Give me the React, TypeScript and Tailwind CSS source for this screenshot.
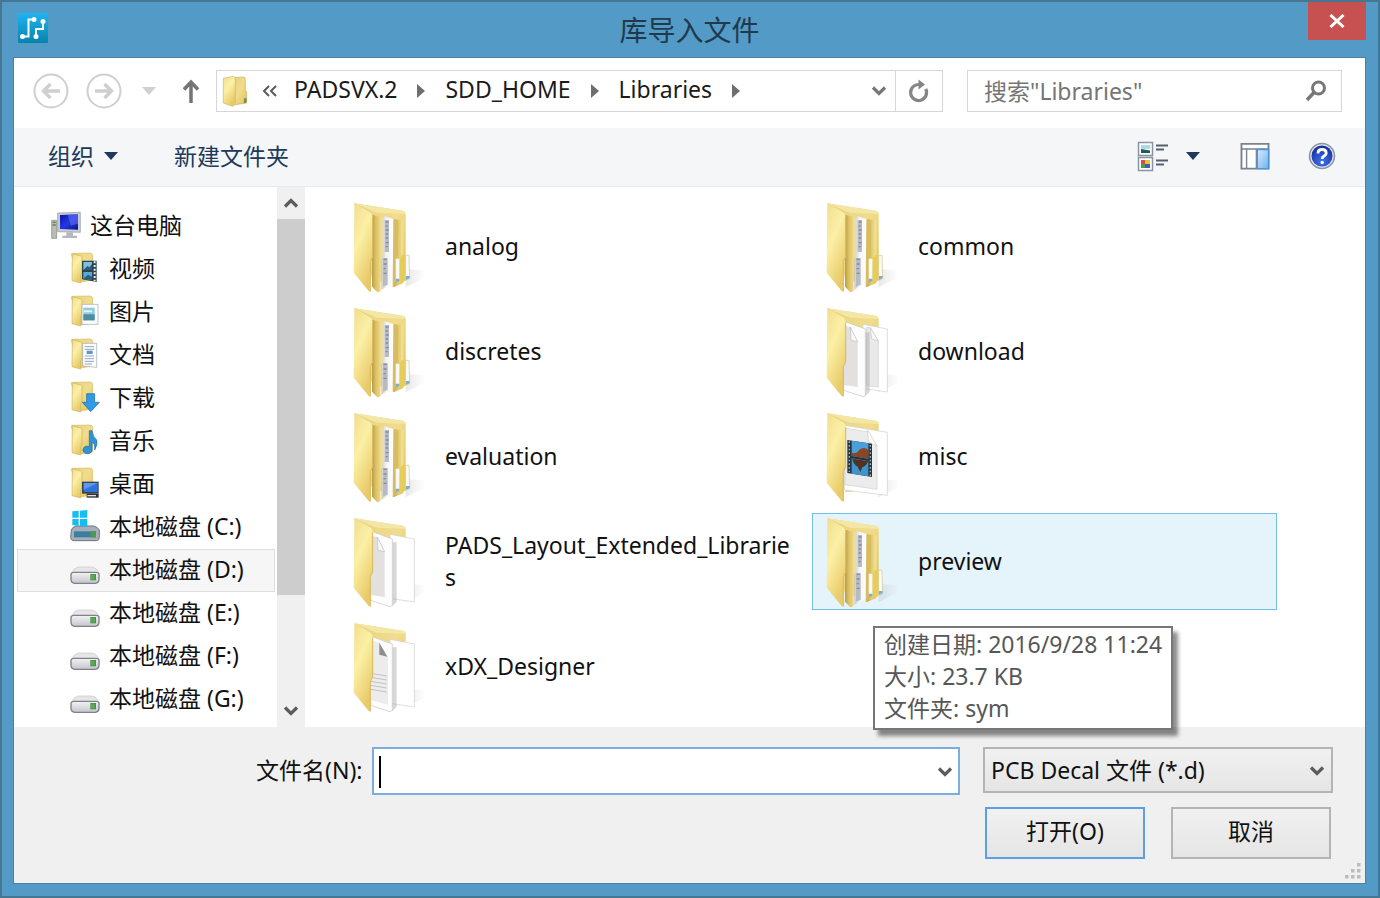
import type { ReactNode } from "react";
import clsx from "clsx";

type PlaceIcon = "video" | "picture" | "document" | "download" | "music" | "desktop" | "system" | "drive";
type FolderKind = "binders" | "papers" | "film" | "layout" | "text";

const places: { label: string; icon: PlaceIcon; selected?: boolean }[] = [
  { label: "视频", icon: "video" },
  { label: "图片", icon: "picture" },
  { label: "文档", icon: "document" },
  { label: "下载", icon: "download" },
  { label: "音乐", icon: "music" },
  { label: "桌面", icon: "desktop" },
  { label: "本地磁盘 (C:)", icon: "system" },
  { label: "本地磁盘 (D:)", icon: "drive", selected: true },
  { label: "本地磁盘 (E:)", icon: "drive" },
  { label: "本地磁盘 (F:)", icon: "drive" },
  { label: "本地磁盘 (G:)", icon: "drive" },
];

const folders: { name: string; kind: FolderKind; tip?: string[] }[] = [
  { name: "analog", kind: "binders" },
  { name: "common", kind: "binders" },
  { name: "discretes", kind: "binders" },
  { name: "download", kind: "papers" },
  { name: "evaluation", kind: "binders" },
  { name: "misc", kind: "film" },
  { name: "PADS_Layout_Extended_Libraries", kind: "layout" },
  {
    name: "preview",
    kind: "binders",
    tip: ["创建日期: 2016/9/28 11:24", "大小: 23.7 KB", "文件夹: sym"],
  },
  { name: "xDX_Designer", kind: "text" },
];

const crumbs = ["PADSVX.2", "SDD_HOME", "Libraries"];

function Gradients() {
  return (
    <svg className="absolute h-0 w-0" aria-hidden="true">
      <defs>
        <linearGradient id="cover" x1="0" y1="0" x2="0.5" y2="1">
          <stop offset="0" stopColor="#f0dd8e" />
          <stop offset="0.45" stopColor="#fbf0a6" />
          <stop offset="1" stopColor="#e9ca68" />
        </linearGradient>
        <linearGradient id="back" x1="0" y1="0" x2="1" y2="1">
          <stop offset="0" stopColor="#ead27c" />
          <stop offset="0.5" stopColor="#f0dc8d" />
          <stop offset="1" stopColor="#dfc052" />
        </linearGradient>
        <linearGradient id="binder" x1="0" y1="0" x2="1" y2="0">
          <stop offset="0" stopColor="#b99c45" />
          <stop offset="0.35" stopColor="#dcc063" />
          <stop offset="1" stopColor="#f5e59c" />
        </linearGradient>
        <linearGradient id="sheet" x1="0" y1="0" x2="1" y2="0">
          <stop offset="0" stopColor="#c9c9c7" />
          <stop offset="0.4" stopColor="#f4f4f4" />
          <stop offset="1" stopColor="#ffffff" />
        </linearGradient>
        <linearGradient id="shade" x1="0" y1="0" x2="1" y2="0">
          <stop offset="0" stopColor="#9a9a9a" stopOpacity="0.5" />
          <stop offset="1" stopColor="#9a9a9a" stopOpacity="0" />
        </linearGradient>
        <linearGradient id="metal" x1="0" y1="0" x2="0" y2="1">
          <stop offset="0" stopColor="#f4f4f6" />
          <stop offset="1" stopColor="#c4c4cc" />
        </linearGradient>
        <linearGradient id="screen" x1="0" y1="0" x2="1" y2="1">
          <stop offset="0" stopColor="#0a12a8" />
          <stop offset="0.5" stopColor="#2438e0" />
          <stop offset="1" stopColor="#0c1486" />
        </linearGradient>
        <linearGradient id="pane" x1="0" y1="0" x2="1" y2="1">
          <stop offset="0" stopColor="#d8ecfc" />
          <stop offset="1" stopColor="#6fb3ee" />
        </linearGradient>
        <linearGradient id="app" x1="0" y1="0" x2="0" y2="1">
          <stop offset="0" stopColor="#1eb4f0" />
          <stop offset="1" stopColor="#0784ad" />
        </linearGradient>
        <radialGradient id="help" cx="0.5" cy="0.75" r="0.7">
          <stop offset="0" stopColor="#3f74f0" />
          <stop offset="1" stopColor="#16309c" />
        </radialGradient>
      </defs>
    </svg>
  );
}

function BigFolder({ kind }: { kind: FolderKind }) {
  return (
    <svg viewBox="39 33 228 276" className="h-[92px] w-[76px] shrink-0" aria-hidden="true">
      <path d="M196 292 L258 262 L250 240 L200 238 Z" fill="url(#shade)" opacity="0.45" />
      <path d="M43 40 L188 62 Q197 64 197 72 V268 L98 276 Z" fill="url(#back)" />
      <path d="M43 40 L188 62 Q197 64 197 72 L110 68 Z" fill="#f4e6a4" />
      {kind === "binders" && (
        <>
          <path d="M160 88 L190 90 V196 L184 204 V282 L160 292 Z" fill="url(#binder)" />
          <path d="M96 74 L128 82 V200 L122 210 V304 L112 307 L96 290 Z" fill="url(#binder)" />
          <path d="M128 82 L134 79 L162 88 V280 L124 299 V210 L128 200 Z" fill="url(#sheet)" />
          <path d="M134 90 h13 v96 h-13 Z M129 204 h14 v80 l-14 6 Z" fill="#b9bbc2" />
          <path d="M137 96 h9 m-9 12 h6 m-6 12 h9 m-9 12 h7 m-7 12 h7 m-7 14 h9 m-9 12 h6 m-12 38 h9 m-9 14 h9 m-9 14 h6 m-6 14 h9" stroke="#858a98" strokeWidth="4" />
          <path d="M160 88 L174 92 V198 L166 210 V284 L158 291 Z" fill="#d8bd60" />
          <path d="M167 206 h12 v64 l-12 5 Z" fill="#f7f8fa" />
          <path d="M197 196 L207 196 L209 266 L196 272 Z" fill="#fafafa" stroke="#d2c689" strokeWidth="2" />
          <path d="M179 205 L188 194 H196 V270 L186 282 H178 Z" fill="#e6cc5b" />
          <path d="M198 258 h11 v7 l-12 5 Z M167 266 h11 v7 l-11 4 Z" fill="#7fb0c8" />
        </>
      )}
      {kind === "film" && (
        <>
          <path d="M94 76 L223 97 V286 L94 270 Z" fill="#fff" stroke="#cfcfcf" strokeWidth="2" />
          <path d="M96 84 L166 96 L192 138 V268 L96 254 Z" fill="#ececec" stroke="#d0d0d0" strokeWidth="2" />
          <path d="M164 90 L166 126 L192 138 Z" fill="#fff" stroke="#c8c8c8" strokeWidth="2" />
          <path d="M103 120 L177 131 V231 L103 219 Z" fill="#26343c" />
          <path d="M116 122 L166 130 V176 L116 168 Z" fill="#4a9fd8" />
          <path d="M116 175 L166 183 V229 L116 221 Z" fill="#3f93cf" />
          <path d="M116 158 Q130 164 138 150 Q152 138 166 150 V176 L116 168 Z" fill="#8a4426" />
          <path d="M118 176 L166 184 Q158 200 148 202 L142 216 L134 200 Q122 194 118 176 Z" fill="#51311f" />
          <path d="M109 124 V216 M172 135 V228" stroke="#9fb0b6" strokeWidth="4" strokeDasharray="5 6" />
        </>
      )}
      {(kind === "papers" || kind === "layout" || kind === "text") && (
        <>
          <path d="M150 88 L223 102 V291 L150 280 Z" fill="#fff" stroke="#cfcfcf" strokeWidth="2" />
          {kind === "papers" && (
            <>
              <path d="M160 98 L172 98 L196 138 V276 L160 272 Z" fill="#e9e9e9" stroke="#d0d0d0" strokeWidth="2" />
              <path d="M172 98 L176 132 L196 138 Z" fill="#fafafa" stroke="#c2c2c2" strokeWidth="2" />
            </>
          )}
          <path d="M157 112 L170 112 V290 L157 304 Z" fill="#9a9a9a" opacity="0.4" />
          <path d="M92 78 L157 102 V302 L150 305 L92 286 Z" fill="#fdfdfd" stroke="#c4c4c4" strokeWidth="2" />
          {kind !== "text" ? (
            <>
              <path d="M92 92 L112 96 L134 140 V276 L92 270 Z" fill="#e2e1df" />
              <path d="M112 96 L114 136 L134 140 Z" fill="#fafafa" stroke="#bdbdbd" strokeWidth="2" />
            </>
          ) : (
            <>
              <path d="M92 90 L118 98 L144 140 V284 L92 270 Z" fill="#ececec" />
              <path d="M118 98 V134 L142 140 Z" fill="#8e8e8e" />
              <path d="M92 190 l48 8 m-48 4 l48 8 m-48 4 l48 8 m-48 4 l48 8 m-48 4 l48 8" stroke="#c2c2c2" strokeWidth="3" />
            </>
          )}
        </>
      )}
      <path d="M43 39 L92 68 Q98 73 98 80 V202 L91 214 V305 L86 303 L41 248 Z" fill="url(#cover)" />
      <path d="M98 82 V202 L91 214 V304" fill="none" stroke="#d8b95c" strokeWidth="3" />
    </svg>
  );
}

function SmallFolder({ children }: { children?: ReactNode }) {
  return (
    <svg viewBox="0 0 90 96" className="h-8 w-[30px] shrink-0" aria-hidden="true">
      <path d="M4 7 Q4 4 8 4 L60 3 Q68 4 68 10 V84 L30 90 Z" fill="url(#back)" stroke="#d6bd68" strokeWidth="2" />
      <path d="M7 5 L32 12 Q36 14 36 18 V62 L32 68 V93 L6 86 Z" fill="url(#cover)" stroke="#cdb25b" strokeWidth="2" />
      {children}
    </svg>
  );
}

function PlaceGlyph({ icon }: { icon: PlaceIcon }) {
  switch (icon) {
    case "video":
      return (
        <SmallFolder>
          <path d="M36 26 H80 V90 L36 82 Z" fill="#2c4452" />
          <path d="M40 30 H66 V54 H40 Z" fill="#7fc0de" />
          <path d="M40 60 H66 V84 L40 80 Z" fill="#5aa9d6" />
          <path d="M40 54 L52 42 L58 46 L66 36 V54 Z M40 80 L54 68 L66 74 V84 Z" fill="#2a5f7a" />
          <path d="M74 28 V88" stroke="#e8eef0" strokeWidth="6" strokeDasharray="6 5" />
        </SmallFolder>
      );
    case "picture":
      return (
        <SmallFolder>
          <path d="M36 28 H84 V88 H36 Z" fill="#fdfdfd" stroke="#9fa8b0" strokeWidth="2" />
          <path d="M40 38 H74 V76 H40 Z" fill="#8ecbe0" />
          <path d="M40 58 H74 V76 H40 Z" fill="#4c8ea0" />
          <path d="M42 46 H66 V52 H42 Z" fill="#e6f4f8" />
        </SmallFolder>
      );
    case "document":
      return (
        <SmallFolder>
          <path d="M38 16 H80 V88 L38 84 Z" fill="#fdfdfd" stroke="#9fa8b0" strokeWidth="2" />
          <path d="M44 26 H72 M44 34 H72 M44 54 H72 M44 62 H72 M44 70 H72 M44 78 H66" stroke="#8fa8be" strokeWidth="3" />
          <path d="M50 38 H68 V48 H50 Z" fill="#5d97cc" />
        </SmallFolder>
      );
    case "download":
      return (
        <SmallFolder>
          <path d="M50 38 H74 V64 H88 L62 92 L37 64 H50 Z" fill="#2f9ae8" stroke="#1568b0" strokeWidth="2" />
        </SmallFolder>
      );
    case "music":
      return (
        <SmallFolder>
          <path d="M58 20 H66 Q68 38 80 48 Q84 60 74 78 Q76 58 66 54 V80 Q62 92 46 88 Q34 82 42 70 Q50 64 58 68 Z" fill="#2f93d8" stroke="#1b68a4" strokeWidth="2" />
        </SmallFolder>
      );
    case "desktop":
      return (
        <SmallFolder>
          <path d="M36 44 H86 V80 H36 Z" fill="#3a4250" />
          <path d="M41 48 H83 V75 H41 Z" fill="#2f74dc" />
          <path d="M41 48 H83 L41 68 Z" fill="#5b9af0" />
          <path d="M50 80 H86 V92 H50 Z" fill="#2b3038" />
          <path d="M52 86 H78" stroke="#dfe3e8" strokeWidth="4" />
        </SmallFolder>
      );
    case "system":
      return (
        <svg viewBox="0 0 90 96" className="h-8 w-[30px] shrink-0" aria-hidden="true">
          <path d="M4 60 Q6 52 18 48 H72 Q84 52 88 60 V82 Q88 92 80 92 H12 Q2 92 2 82 Z" fill="#a9adb6" stroke="#6f7480" strokeWidth="3" />
          <path d="M12 64 H78 V82 H12 Z" fill="#3b7fa0" />
          <path d="M62 64 H78 V82 H62 Z" fill="#4c9a50" />
          <path d="M7 4 L26 2 V23 H7 Z M30 2 L52 0 V23 H30 Z M7 27 H26 V48 L7 45 Z M30 27 H52 V50 L30 48 Z" fill="#17bdf2" />
        </svg>
      );
    default:
      return (
        <svg viewBox="0 0 90 96" className="h-8 w-[30px] shrink-0" aria-hidden="true">
          <path d="M4 62 Q12 44 24 42 H66 Q80 44 87 62 Z" fill="#e6e6e8" stroke="#c6c6ca" strokeWidth="2" />
          <path d="M3 64 Q4 58 12 58 H78 Q87 58 87 64 V80 Q86 90 76 91 H14 Q4 90 3 80 Z" fill="url(#metal)" stroke="#808088" strokeWidth="4" />
          <path d="M61 63 H78 V82 H61 Z" fill="#3f9440" />
          <path d="M66 65 V80 M72 65 V80" stroke="#8fd07e" strokeWidth="2" />
        </svg>
      );
  }
}

function ComputerIcon() {
  return (
    <svg viewBox="0 0 90 96" className="h-8 w-[30px] shrink-0" aria-hidden="true">
      <path d="M2 34 H17 V88 H2 Z" fill="#b9beb4" stroke="#7d8478" strokeWidth="2" />
      <path d="M5 40 H14 M5 48 H14" stroke="#4e8a3c" strokeWidth="4" />
      <path d="M20 12 L88 10 V70 L20 68 Z" fill="#c9ccd4" stroke="#8f949e" strokeWidth="2" />
      <path d="M27 18 L81 16 V62 L27 60 Z" fill="url(#screen)" />
      <path d="M50 17 L81 16 V44 L60 50 Z" fill="#5468f0" opacity="0.7" />
      <path d="M46 70 H66 V80 H78 V87 H34 V80 H46 Z" fill="#b4b8c0" />
    </svg>
  );
}

function Chevron({ up = false, className }: { up?: boolean; className?: string }) {
  return (
    <svg viewBox="0 0 16 12" className={clsx("h-3 w-4", className)} aria-hidden="true">
      <path d={up ? "M2 9.5 L8 3.5 L14 9.5" : "M2 2.5 L8 8.5 L14 2.5"} fill="none" stroke="currentColor" strokeWidth="3.2" />
    </svg>
  );
}

function Triangle({ className }: { className?: string }) {
  return (
    <svg viewBox="0 0 14 8" className={clsx("h-2 w-[14px]", className)} aria-hidden="true">
      <path d="M0 0 H14 L7 8 Z" fill="currentColor" />
    </svg>
  );
}

function TitleBar() {
  return (
    <header className="relative flex h-[55px] shrink-0 items-center justify-center">
      <svg viewBox="0 0 30 30" className="absolute top-[11px] left-[5px] h-[30px] w-[30px]" aria-hidden="true">
        <rect width="30" height="30" rx="1" fill="url(#app)" />
        <path d="M4.500 23.500 H10.500 V6.500 H16 M18 23 V16 H25 V9" fill="none" stroke="#fff" strokeWidth="2" />
        <circle cx="4.500" cy="23.500" r="2.500" fill="#fff" />
        <circle cx="16" cy="6.500" r="2.500" fill="#fff" />
        <circle cx="18" cy="23.500" r="2.500" fill="#fff" />
        <circle cx="25" cy="8.500" r="2.500" fill="#fff" />
      </svg>
      <h1 className="text-[28px] leading-9 text-[#1f3a4c]">库导入文件</h1>
      <button type="button" aria-label="关闭" className="absolute top-0 right-0 flex h-[38px] w-[58px] items-center justify-center bg-[#c75050]">
        <svg viewBox="0 0 16 14" className="h-[14px] w-4" aria-hidden="true">
          <path d="M1.500 1 L14.500 13 M14.500 1 L1.500 13" stroke="#fff" strokeWidth="3" />
        </svg>
      </button>
    </header>
  );
}

function NavBar() {
  return (
    <nav className="flex h-[70px] shrink-0 items-center bg-white pr-[23px] pb-1 pl-[19px]">
      <div className="mr-[10px] flex items-center gap-[17px]">
        <button type="button" aria-label="后退">
          <svg viewBox="0 0 36 36" className="h-9 w-9" fill="none" stroke="#cfcfcf" aria-hidden="true">
            <circle cx="18" cy="18" r="16.500" strokeWidth="2" />
            <path d="M27 18 H11 M17.500 11 L10.500 18 L17.500 25" strokeWidth="3.500" />
          </svg>
        </button>
        <button type="button" aria-label="前进">
          <svg viewBox="0 0 36 36" className="h-9 w-9" fill="none" stroke="#cfcfcf" aria-hidden="true">
            <circle cx="18" cy="18" r="16.500" strokeWidth="2" />
            <path d="M9 18 H25 M18.500 11 L25.500 18 L18.500 25" strokeWidth="3.500" />
          </svg>
        </button>
        <button type="button" aria-label="最近浏览的位置" className="flex w-5 justify-center text-[#d0d0d0]">
          <Triangle />
        </button>
        <button type="button" aria-label="上移">
          <svg viewBox="0 0 30 30" className="h-[30px] w-[30px]" fill="none" stroke="#747474" aria-hidden="true">
            <path d="M15 27 V7 M8 13.500 L15 6 L22 13.500" strokeWidth="3.500" />
          </svg>
        </button>
      </div>

      <div className="flex h-[42px] flex-1 items-center border border-[#d5d5da]">
        <svg viewBox="0 0 78 96" className="ml-[5px] h-8 w-[26px]" aria-hidden="true">
          <path d="M34 8 L66 6 Q70 8 70 14 V44 L74 52 V84 L34 90 Z" fill="url(#back)" stroke="#cdb25b" strokeWidth="2" />
          <path d="M4 10 L34 4 Q40 6 40 12 V84 L32 94 L4 84 Z" fill="url(#cover)" stroke="#d0b55e" strokeWidth="2" />
          <path d="M66 70 h8 v12 l-8 3 Z" fill="#6c8f62" />
        </svg>
        <svg viewBox="0 0 16 14" className="ml-[14px] h-[14px] w-4" fill="none" stroke="#5a5a5a" strokeWidth="2" aria-hidden="true">
          <path d="M7 2 L2 7 L7 12 M14 2 L9 7 L14 12" />
        </svg>
        <ol className="flex flex-1 items-center pb-1 pl-4">
          {crumbs.map((crumb) => (
            <li key={crumb} className="flex items-center">
              <a href="#" className="text-[#1b1b1b]">
                {crumb}
              </a>
              <svg viewBox="0 0 8 14" className="mx-5 mt-1 h-[14px] w-2" aria-hidden="true">
                <path d="M0 0 L8 7 L0 14 Z" fill="#6e6e6e" />
              </svg>
            </li>
          ))}
        </ol>
        <button type="button" aria-label="以前的位置" className="mr-2 text-[#777]">
          <Chevron />
        </button>
        <button type="button" aria-label="刷新" className="flex h-full w-[47px] items-center justify-center border-l border-[#d5d5da]">
          <svg viewBox="0 0 22 24" className="h-6 w-[22px]" aria-hidden="true">
            <path d="M17.800 10 A8 8 0 1 1 11 5.500" fill="none" stroke="#858585" strokeWidth="3.200" />
            <path d="M10.500 0.500 L17 5.500 L10.500 10.500 Z" fill="#858585" />
          </svg>
        </button>
      </div>

      <div className="relative ml-6 w-[375px]">
        <input
          type="search"
          aria-label={'搜索"Libraries"'}
          placeholder={'搜索"Libraries"'}
          className="block h-[42px] w-full border border-[#d5d5da] bg-white pr-12 pl-4 text-[#6d6d6d] outline-none placeholder:text-[#757575]"
        />
        <svg viewBox="0 0 22 22" className="pointer-events-none absolute top-[10px] right-[15px] h-[22px] w-[22px]" fill="none" stroke="#777" aria-hidden="true">
          <circle cx="13.500" cy="8" r="6" strokeWidth="3" />
          <path d="M9 12.500 L2 20" strokeWidth="3.500" />
        </svg>
      </div>
    </nav>
  );
}

function Toolbar() {
  return (
    <div className="flex h-[59px] shrink-0 items-center border-b border-[#e8eaec] bg-[#f4f6f7] pr-[29px] pb-[2px] pl-[34px] text-[#20385c]">
      <button type="button" className="flex items-center gap-[10px]">
        组织
        <Triangle />
      </button>
      <button type="button" className="ml-14">
        新建文件夹
      </button>
      <button type="button" aria-label="更改视图" className="ml-auto flex items-center gap-[17px]">
        <svg viewBox="0 0 32 32" className="h-8 w-8" aria-hidden="true">
          <path d="M1.500 2.500 H15.500 V15.500 H1.500 Z M1.500 17.500 H15.500 V30.500 H1.500 Z" fill="#fff" stroke="#8b93a3" strokeWidth="1.500" />
          <path d="M4 5 H13 V9 H4 Z" fill="#a6dce8" />
          <path d="M4 9 L13 10.500 V13 H4 Z" fill="#1f5a60" />
          <path d="M4 20 H8 V24 H4 Z" fill="#d6513c" />
          <path d="M8 20 H13 V24 H8 Z" fill="#e3c83e" />
          <path d="M4 24 H8 V28 H4 Z" fill="#4a9e45" />
          <path d="M8 24 H13 V28 H8 Z" fill="#4a5ab8" />
          <path d="M19 5.500 H31 M19 9.500 H27 M19 20.500 H31 M19 24.500 H27" stroke="#55606e" strokeWidth="1.800" />
        </svg>
        <Triangle />
      </button>
      <button type="button" aria-label="预览窗格" className="ml-[40px]">
        <svg viewBox="0 0 32 30" className="h-7 w-[30px]" aria-hidden="true">
          <path d="M1.500 2 H30.500 V28.500 H1.500 Z" fill="#fff" stroke="#7c828c" strokeWidth="2" />
          <path d="M2 7.500 H30 M7 8 V28 M17.500 8 V28" stroke="#7c828c" strokeWidth="1.500" />
          <path d="M18.500 8 H30.500 V28.500 H18.500 Z" fill="url(#pane)" stroke="#4a98dc" strokeWidth="1.500" />
        </svg>
      </button>
      <button type="button" aria-label="获取帮助" className="ml-[38px]">
        <svg viewBox="0 0 28 28" className="h-7 w-7" aria-hidden="true">
          <circle cx="14" cy="14" r="12.500" fill="#dfe2ea" stroke="#8b93a6" strokeWidth="1.500" />
          <circle cx="14" cy="14" r="10.500" fill="url(#help)" />
          <path d="M10 11.500 Q10 7.500 14 7.500 Q18.200 7.500 18.200 11 Q18.200 13 15.800 14.200 Q14.200 15 14.200 17" fill="none" stroke="#fff" strokeWidth="2.800" />
          <circle cx="14.200" cy="20.500" r="1.700" fill="#fff" />
        </svg>
      </button>
    </div>
  );
}

function Sidebar() {
  return (
    <aside className="flex w-[291px] shrink-0">
      <ul className="flex-1 pt-[18px] pr-[2px] pl-[3px]">
        <li>
          <button type="button" className="flex h-[43px] w-full items-center gap-[9px] border border-transparent pb-1 pl-[33px]">
            <ComputerIcon />
            这台电脑
          </button>
        </li>
        {places.map((place) => (
          <li key={place.label}>
            <button
              type="button"
              className={clsx(
                "flex h-[43px] w-full items-center gap-[9px] border pb-1 pl-[52px] whitespace-nowrap",
                place.selected ? "border-[#dedede] bg-[#f6f6f6]" : "border-transparent",
              )}
            >
              <PlaceGlyph icon={place.icon} />
              {place.label}
            </button>
          </li>
        ))}
      </ul>
      <div className="flex w-7 flex-col items-center bg-[#f0f0f0] text-[#5c5c5c]">
        <button type="button" aria-label="向上滚动" className="flex h-8 w-full shrink-0 items-center justify-center">
          <Chevron up />
        </button>
        <div className="w-full flex-1">
          <div className="h-[79%] bg-[#cdcdcd]" />
        </div>
        <button type="button" aria-label="向下滚动" className="flex h-8 w-full shrink-0 items-center justify-center">
          <Chevron />
        </button>
      </div>
    </aside>
  );
}

function FileGrid() {
  return (
    <ul className="grid flex-1 auto-rows-[97px] grid-cols-2 gap-2 pt-[11px] pr-[88px] pl-[34px]">
      {folders.map((folder) => (
        <li key={folder.name} className="relative">
          <button
            type="button"
            className={clsx(
              "flex h-full w-full items-center gap-4 border pr-2 pl-[13px] text-left",
              folder.tip ? "border-[#70c0e7] bg-[#e5f3fb]" : "border-transparent",
            )}
          >
            <BigFolder kind={folder.kind} />
            <span className="min-w-0 flex-1 pb-[2px] leading-8 break-all">{folder.name}</span>
          </button>
          {folder.tip && (
            <div
              role="tooltip"
              className="absolute top-[113px] left-[61px] z-10 border-2 border-[#767676] bg-white px-[9px] pb-1 leading-8 whitespace-nowrap text-[#575757] shadow-[5px_6px_4px_rgba(0,0,0,0.45)]"
            >
              {folder.tip.map((line) => (
                <p key={line}>{line}</p>
              ))}
            </div>
          )}
        </li>
      ))}
    </ul>
  );
}

function Footer() {
  return (
    <footer className="relative shrink-0 bg-[#f0f0f0] pt-5 pb-6 pl-[242px]">
      <div className="flex items-start pr-8">
        <label htmlFor="file-name" className="mr-[10px] shrink-0 leading-[46px]">
          文件名(N):
        </label>
        <div className="relative flex-1">
          <input
            id="file-name"
            type="text"
            className="block h-12 w-full border-2 border-[#7aaee0] bg-white pr-9 pl-2 caret-transparent outline-none"
          />
          <span className="pointer-events-none absolute top-[9px] left-[7px] h-8 w-[2px] bg-black" />
          <button type="button" aria-label="显示文件名列表" className="absolute top-[19px] right-[7px] text-[#5c5c5c]">
            <Chevron />
          </button>
        </div>
        <div className="relative ml-[23px] w-[350px]">
          <select
            aria-label="文件类型"
            className="block h-[46px] w-full appearance-none border-2 border-[#b4b4b4] bg-linear-to-b from-[#f1f1f1] to-[#e5e5e5] pl-[6px] outline-none"
          >
            <option>PCB Decal 文件 (*.d)</option>
          </select>
          <Chevron className="pointer-events-none absolute top-[18px] right-2 text-[#5c5c5c]" />
        </div>
      </div>
      <div className="mt-3 flex justify-end gap-[26px] pr-[34px]">
        <button type="button" className="h-[52px] w-40 border-2 border-[#5c9fe6] bg-linear-to-b from-[#f1f1f1] to-[#e5e5e5] pb-1">
          打开(O)
        </button>
        <button type="button" className="h-[52px] w-40 border-2 border-[#b4b4b4] bg-linear-to-b from-[#f1f1f1] to-[#e5e5e5] pb-1">
          取消
        </button>
      </div>
      <svg viewBox="0 0 16 16" className="absolute right-1 bottom-1 h-4 w-4" fill="#bcbcbc" aria-hidden="true">
        <path d="M12 0 h3.500 v3.500 h-3.500 Z M12 6 h3.500 v3.500 h-3.500 Z M6 6 h3.500 v3.500 h-3.500 Z M12 12 h3.500 v3.500 h-3.500 Z M6 12 h3.500 v3.500 h-3.500 Z M0 12 h3.500 v3.500 h-3.500 Z" />
      </svg>
    </footer>
  );
}

export default function App() {
  return (
    <main className="flex min-h-screen flex-col border-2 border-[#457792] bg-[#539ac6] pr-3 pb-3 pl-[11px] font-['Noto_Sans','Noto_Sans_CJK_SC',sans-serif] text-[23px] leading-8 text-[#111]">
      <Gradients />
      <TitleBar />
      <div className="flex flex-1 flex-col border border-[#4a80a2] bg-white">
        <NavBar />
        <Toolbar />
        <div className="flex flex-1">
          <Sidebar />
          <FileGrid />
        </div>
        <Footer />
      </div>
    </main>
  );
}
